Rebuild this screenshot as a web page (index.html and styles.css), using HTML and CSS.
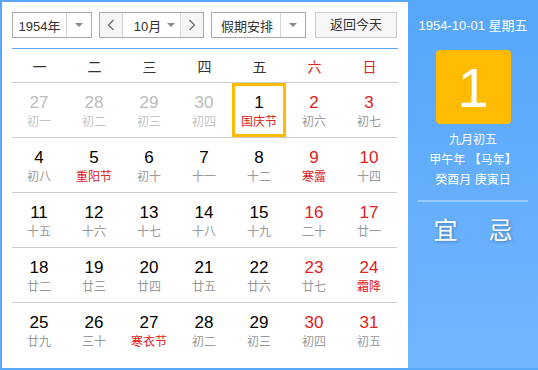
FILE: index.html
```html
<!DOCTYPE html>
<html lang="zh-CN">
<head>
    <meta charset="UTF-8">
    <title>万年历</title>
    <link rel="stylesheet" href="styles.css">
</head>
<body>
    <div class="calendar">
        <div class="main">
            <div class="toolbar">
                <div class="select year">
                    <span class="value">1954年</span>
                    <span class="caret"><i></i></span>
                </div>
                <div class="select month">
                    <span class="nav"><svg width="8" height="12" viewBox="0 0 8 12"><path d="M6.5 1 L1.5 6 L6.5 11" fill="none" stroke="#666" stroke-width="1.2"/></svg></span>
                    <span class="value">10月</span>
                    <span class="caret inline"><i></i></span>
                    <span class="nav"><svg width="8" height="12" viewBox="0 0 8 12"><path d="M1.5 1 L6.5 6 L1.5 11" fill="none" stroke="#666" stroke-width="1.2"/></svg></span>
                </div>
                <div class="select holiday">
                    <span class="value">假期安排</span>
                    <span class="caret"><i></i></span>
                </div>
                <div class="btn-today">返回今天</div>
            </div>
            <div class="week">
                <span>一</span><span>二</span><span>三</span><span>四</span><span>五</span>
                <span class="red">六</span><span class="red">日</span>
            </div>
            <div class="days" id="days"></div>
        </div>
        <div class="side">
            <div class="side-date">1954-10-01 星期五</div>
            <div class="big-day">1</div>
            <div class="lunar">
                <p>九月初五</p>
                <p>甲午年 【马年】</p>
                <p>癸酉月 庚寅日</p>
            </div>
            <div class="yiji">
                <span>宜</span>
                <span>忌</span>
            </div>
        </div>
    </div>
    <script>
        // [日期, 农历, 类型] 类型: o=上月, w=周末, h=节日, t=今天
        var days = [
            [27,"初一","o"],[28,"初二","o"],[29,"初三","o"],[30,"初四","o"],[1,"国庆节","t h"],[2,"初六","w"],[3,"初七","w"],
            [4,"初八",""],[5,"重阳节","h"],[6,"初十",""],[7,"十一",""],[8,"十二",""],[9,"寒露","w h"],[10,"十四","w"],
            [11,"十五",""],[12,"十六",""],[13,"十七",""],[14,"十八",""],[15,"十九",""],[16,"二十","w"],[17,"廿一","w"],
            [18,"廿二",""],[19,"廿三",""],[20,"廿四",""],[21,"廿五",""],[22,"廿六",""],[23,"廿七","w"],[24,"霜降","w h"],
            [25,"廿九",""],[26,"三十",""],[27,"寒衣节","h"],[28,"初二",""],[29,"初三",""],[30,"初四","w"],[31,"初五","w"]
        ];
        var html = "";
        days.forEach(function(d, i) {
            var cls = d[2].split(" ").filter(Boolean).map(function(c){ return "is-" + c; }).join(" ");
            if (i >= 28) cls += " last";
            html += '<div class="day ' + cls + '"><div class="cell"><b>' + d[0] + '</b><em>' + d[1] + '</em></div></div>';
        });
        document.getElementById("days").innerHTML = html;
    </script>
</body>
</html>
```

FILE: styles.css
```css
body {
    margin: 0;
    font-family: "Liberation Sans", "Noto Sans CJK SC", sans-serif;
}
.calendar {
    display: flex;
    width: 538px;
    height: 370px;
    box-sizing: border-box;
    border: 2px solid #58a7f9;
    border-right: 0;
}
.main {
    width: 406px;
    background: #fff;
    padding: 10px 10px 0 10px;
    box-sizing: border-box;
}
.toolbar {
    display: flex;
    height: 26px;
    border-bottom: 1px solid #5aa6f8;
    padding-bottom: 10px;
}
.select {
    display: flex;
    align-items: center;
    height: 26px;
    box-sizing: border-box;
    border: 1px solid #a8a8a8;
    font-size: 13px;
    color: #333;
}
.select .value {
    flex: 1;
    text-align: center;
}
.caret {
    width: 24px;
    height: 100%;
    border-left: 1px solid #d4d4d4;
    display: flex;
    align-items: center;
    justify-content: center;
}
.caret i {
    width: 0;
    height: 0;
    border-left: 4px solid transparent;
    border-right: 4px solid transparent;
    border-top: 4px solid #888;
}
.caret.inline {
    width: 18px;
    border-left: 0;
}
.year {
    width: 80px;
}
.month {
    width: 105px;
    margin-left: 7px;
}
.month .value {
    padding-left: 10px;
}
.nav {
    width: 22px;
    height: 100%;
    background: #f5f5f5;
    display: flex;
    align-items: center;
    justify-content: center;
}
.nav:first-child {
    border-right: 1px solid #d4d4d4;
}
.nav:last-child {
    border-left: 1px solid #d4d4d4;
}
.holiday {
    width: 95px;
    margin-left: 7px;
}
.holiday .value {
    padding-left: 2px;
}
.btn-today {
    width: 82px;
    height: 26px;
    margin-left: 9px;
    box-sizing: border-box;
    border: 1px solid #ccc;
    background: #f7f7f7;
    font-size: 13px;
    color: #333;
    line-height: 24px;
    text-align: center;
}
.week {
    display: grid;
    grid-template-columns: repeat(7, 55px);
    height: 33px;
    line-height: 36px;
    border-bottom: 1px solid #ccc;
    font-size: 14px;
    color: #333;
    text-align: center;
}
.red {
    color: #e02020;
}
.days {
    display: grid;
    grid-template-columns: repeat(7, 55px);
}
.day {
    height: 54px;
    border-bottom: 1px solid #ccc;
    text-align: center;
}
.day.last {
    border-bottom: 0;
}
.cell {
    width: 54px;
    height: 54px;
    box-sizing: border-box;
    padding-top: 10px;
}
.cell b {
    display: block;
    font-weight: normal;
    font-size: 17px;
    line-height: 20px;
    color: #000;
}
.cell em {
    display: block;
    font-style: normal;
    font-size: 12px;
    line-height: 18px;
    color: #999;
}
.is-o b {
    color: #bbb;
}
.is-o em {
    color: #c4c4c4;
}
.is-w b {
    color: #e02020;
}
.is-h em {
    color: #e02020;
}
.is-t .cell {
    border: 3px solid #ffbb00;
    padding-top: 7px;
}
.side {
    flex: 1;
    background: linear-gradient(#56a6fa, #72b6fe);
    color: #fff;
    text-align: center;
}
.side-date {
    font-size: 13px;
    line-height: 16px;
    margin-top: 16px;
}
.big-day {
    width: 75px;
    height: 74px;
    margin: 16px auto 0;
    background: #ffbb00;
    border-radius: 4px;
    font-size: 56px;
    line-height: 76px;
}
.lunar {
    margin: 6px 10px 0;
    padding-bottom: 10px;
    border-bottom: 2px solid rgba(255,255,255,0.35);
    font-size: 12px;
}
.lunar p {
    margin: 0;
    line-height: 20px;
}
.yiji {
    display: flex;
    justify-content: center;
    gap: 31px;
    margin-top: 9px;
    font-size: 24px;
    text-shadow: 1px 1px 3px rgba(0,0,0,0.3);
}
```
